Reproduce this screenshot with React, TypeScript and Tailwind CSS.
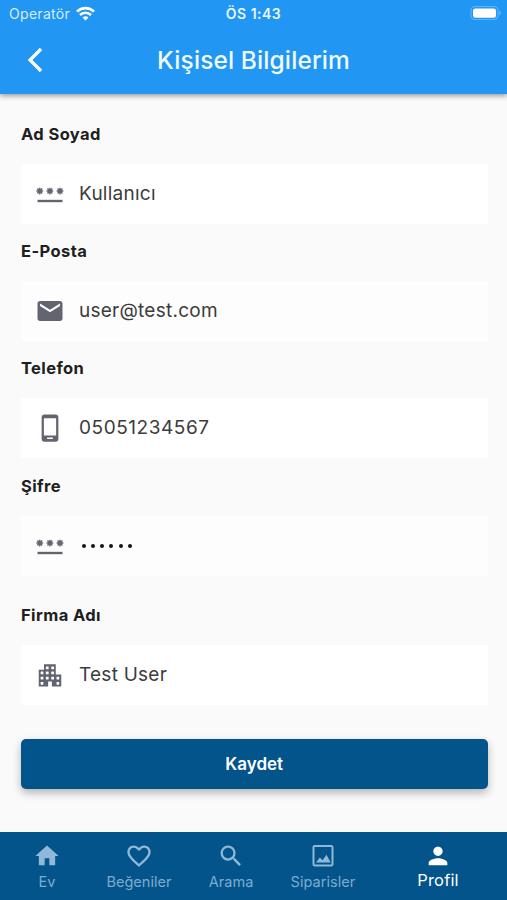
import type { ComponentType, ReactNode } from 'react';
import { MdEmail, MdFavoriteBorder, MdHome, MdPerson, MdSearch } from 'react-icons/md';

type IconProps = { className?: string };

function PasswordIcon({ className }: IconProps) {
  return (
    <svg className={className} viewBox="0 0 24 24" fill="none" stroke="currentColor">
      <path d="M2 17.6h20" strokeWidth="1.9" />
      {[3.8, 11.9, 20].map((x) => (
        <path
          key={x}
          transform={`translate(${x} 9.6)`}
          strokeWidth="1.15"
          d="M0-2.700V2.700M-2.700 0H2.700M-1.950-1.950 1.950 1.950M1.950-1.950-1.950 1.950"
        />
      ))}
    </svg>
  );
}

function PhoneIcon({ className }: IconProps) {
  return (
    <svg className={className} viewBox="0 0 24 24" fill="currentColor" fillRule="evenodd">
      <path d="M7.700 1.100h8.600a2.400 2.400 0 0 1 2.400 2.400v17a2.400 2.400 0 0 1-2.400 2.400H7.700a2.400 2.400 0 0 1-2.400-2.400v-17a2.400 2.400 0 0 1 2.400-2.400zM7.100 4.200v13.700h9.800V4.200zM9.700 19.500v1.300h4.600v-1.300z" />
    </svg>
  );
}

const windows = [
  [9.8, 6.2], [14.1, 6.2],
  [5.6, 10.3], [9.8, 10.3], [14.1, 10.3],
  [5.6, 14.4], [9.8, 14.4], [14.1, 14.4], [18.3, 14.4],
  [5.6, 18.6], [18.3, 18.6],
];

function BuildingIcon({ className }: IconProps) {
  return (
    <svg className={className} viewBox="0 0 24 24" fill="currentColor">
      <path d="M3 7.800h4.200V3.400h9.400v8.200H21v9.600h-7.500v-4h-3v4H3z" />
      {windows.map(([x, y]) => (
        <rect key={`${x}-${y}`} x={x - 1.1} y={y - 1.1} width="2.2" height="2.2" rx="0.3" fill="white" />
      ))}
    </svg>
  );
}

function StatusBar() {
  return (
    <div className="grid h-7 grid-cols-3 items-center leading-none">
      <div className="flex items-center gap-[6px] pl-[9px]">
        <span className="text-[14px] tracking-[0.3px] text-[#d5edff]">Operatör</span>
        <svg className="-mt-px" width="19" height="15" viewBox="0 0 19 15" fill="none" stroke="white" strokeWidth="2.7">
          <path d="M1 5.6a12.2 12.2 0 0 1 17 0" />
          <path d="M4 9a7.8 7.8 0 0 1 11 0" />
          <path d="M9.5 14.6 6.5 11.6a4.3 4.3 0 0 1 6 0z" fill="white" stroke="none" />
        </svg>
      </div>
      <span className="text-center text-[14px] font-semibold tracking-[0.5px] text-[#e8f6ff]">ÖS 1:43</span>
      <svg className="mr-[5px] -mt-[2px] justify-self-end" width="32" height="14" viewBox="0 0 32 14">
        <rect x="1" y="0.6" width="27" height="13" rx="4" fill="none" stroke="#6bb8f8" strokeWidth="1" />
        <rect x="3" y="2.4" width="23" height="9.4" rx="2.3" fill="white" />
        <path d="M29.4 5v4.2c.9-.4 1.5-1.2 1.5-2.1s-.6-1.7-1.5-2.1z" fill="#6bb8f8" />
      </svg>
    </div>
  );
}

type FieldProps = { label: string; Icon: ComponentType<IconProps>; children: ReactNode; box: string; text?: string };

function Field({ label, Icon, children, box, text = 'tracking-[0.25px]' }: FieldProps) {
  return (
    <section>
      <h2 className="h-6 text-[16.5px] leading-6 font-bold tracking-[0.4px] text-[#202020]">{label}</h2>
      <div className={'mt-[18px] flex h-[60px] items-center pl-[14px] ' + box}>
        <Icon className="size-[30px] shrink-0 text-[#62646f]" />
        <div className={'ml-[14.5px] text-[19px] leading-6 text-[#3c3c3c] ' + text}>{children}</div>
      </div>
    </section>
  );
}

function ImageFrame({ className }: IconProps) {
  return (
    <svg className={className} viewBox="0 0 24 24" fill="currentColor">
      <path d="M19 2.500H5a2 2 0 0 0-2 2v14.500a2 2 0 0 0 2 2h14a2 2 0 0 0 2-2V4.500a2 2 0 0 0-2-2zm.3 16.800H4.700V4.200h14.600z" />
      <path d="M6 17.5l3.3-4.3 2.3 2.4 3.4-4.6 3.5 6.5z" />
    </svg>
  );
}

function NavItem({ label, children }: { label: string; children: ReactNode }) {
  return (
    <div className="flex flex-1 flex-col items-center pt-[10px] text-[#90b9d7]">
      {children}
      <span className="mt-[3px] text-[14.5px] leading-[18px] tracking-[0.05px] text-[#7daccf]">{label}</span>
    </div>
  );
}

export default function App() {
  return (
    <div className="flex h-[900px] w-[507px] flex-col overflow-hidden bg-[#fafafa] font-['Inter','Liberation_Sans',sans-serif]">
      <header className="z-10 h-[94px] shrink-0 bg-[#2196f3] text-white shadow-[0_2px_5px_rgba(0,0,0,0.38)]">
        <StatusBar />
        <div className="grid h-[63px] grid-cols-[72px_1fr_72px] items-center">
          <svg className="ml-[26px]" width="18" height="26" viewBox="0 0 18 26" fill="none" stroke="white" strokeWidth="3.2">
            <path d="M15 2 4 13l11 11" />
          </svg>
          <h1 className="text-center text-[24.5px] leading-8 font-medium tracking-[0.1px] whitespace-nowrap text-[#f0fbff]">
            Kişisel Bilgilerim
          </h1>
        </div>
      </header>

      <main className="flex flex-1 flex-col pt-7 pr-[19px] pl-[20.5px]">
        <div className="flex flex-col gap-[15.2px] [&_h2]:pl-[0.5px]">
          <Field label="Ad Soyad" Icon={PasswordIcon} box="bg-white">Kullanıcı</Field>
          <Field label="E-Posta" Icon={MdEmail} box="bg-[#fdfdfd]">user@test.com</Field>
          <Field label="Telefon" Icon={PhoneIcon} box="bg-white" text="tracking-[0.55px]">05051234567</Field>
          <Field label="Şifre" Icon={PasswordIcon} box="bg-[#fdfdfd]">
            <span className="flex gap-[5.3px] pl-[2.5px]" aria-label="••••••">
              {[0, 1, 2, 3, 4, 5].map((n) => (
                <i key={n} className="size-1 rounded-full bg-[#161616]" />
              ))}
            </span>
          </Field>
          <div className="mt-[12.4px]">
            <Field label="Firma Adı" Icon={BuildingIcon} box="bg-white">Test User</Field>
          </div>
        </div>
        <button className="mt-[34px] h-[50px] rounded-[5px] bg-[#03548b] pt-[2px] text-[17px] font-semibold text-white shadow-[0_4px_8px_rgba(0,0,0,0.28)]">
          Kaydet
        </button>
      </main>

      <nav className="flex h-[68px] shrink-0 bg-[#03548b] pl-px">
        <NavItem label="Ev"><MdHome className="size-7" /></NavItem>
        <NavItem label="Beğeniler"><MdFavoriteBorder className="size-7" /></NavItem>
        <NavItem label="Arama"><MdSearch className="size-7" /></NavItem>
        <NavItem label="Siparisler"><ImageFrame className="size-7" /></NavItem>
        <div className="flex w-[138px] flex-col items-center pt-[10px] text-white">
          <MdPerson className="size-7" />
          <span className="text-[16.5px] leading-5 tracking-[0.15px]">Profil</span>
        </div>
      </nav>
    </div>
  );
}
